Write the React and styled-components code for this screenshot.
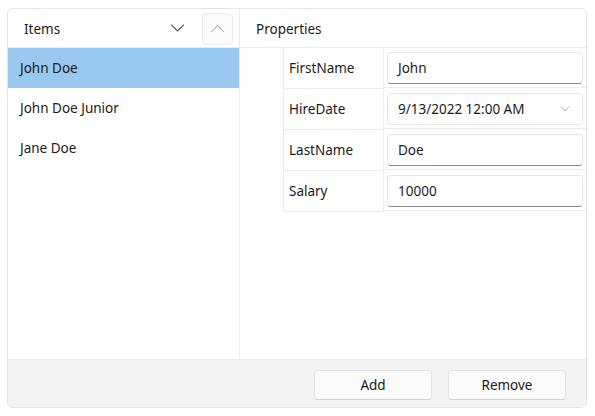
import React from 'react';
import styled, { createGlobalStyle } from 'styled-components';

const GlobalStyle = createGlobalStyle`
  body {
    margin: 0;
    background: #ffffff;
    font-family: "Noto Sans", "Open Sans", "Liberation Sans", sans-serif;
    color: #1b1b1b;
  }
`;

const Page = styled.div`
  padding: 8px 8px 8px 7px;
`;

const Card = styled.div`
  width: 580px;
  height: 400px;
  box-sizing: border-box;
  border: 1px solid #e5e5e5;
  border-radius: 6px;
  overflow: hidden;
  display: grid;
  grid-template-rows: 1fr 48px;
`;

const Main = styled.div`
  display: grid;
  grid-template-columns: 232px 1fr;
  min-height: 0;
`;

const Pane = styled.div`
  display: flex;
  flex-direction: column;
  border-right: ${p => (p.$divider ? '1px solid #ebebeb' : 'none')};
`;

const Header = styled.div`
  height: 39px;
  box-sizing: border-box;
  flex: none;
  display: flex;
  align-items: center;
  padding: 1px 6px 0 ${p => p.$indent}px;
  border-bottom: 1px solid #ebebeb;
  font-size: 13.5px;
`;

const HeaderTitle = styled.span`
  flex: 1;
`;

const ChevronBox = styled.span`
  width: 22px;
  display: flex;
  justify-content: center;
  margin-right: 14px;
`;

const UpButton = styled.button`
  width: 31px;
  height: 32px;
  box-sizing: border-box;
  border: 1px solid #ededed;
  border-radius: 4px;
  background: #fbfbfb;
  display: flex;
  align-items: center;
  justify-content: center;
  padding: 0;
`;

const ListRow = styled.div`
  height: 40px;
  display: flex;
  align-items: center;
  padding-left: 12px;
  font-size: 13.5px;
  background: ${p => (p.$selected ? '#99c9ee' : 'transparent')};
`;

const GridWrap = styled.div`
  padding-left: 43px;
`;

const PropGrid = styled.div`
  display: grid;
  grid-template-columns: 100px 1fr;
  border-left: 1px solid #ebebeb;
`;

const Label = styled.div`
  height: 40px;
  display: flex;
  align-items: center;
  padding-left: 5px;
  font-size: 13.5px;
  border-bottom: 1px solid #ebebeb;
  border-right: 1px solid #ebebeb;
`;

const Cell = styled.div`
  height: 40px;
  display: flex;
  align-items: center;
  padding: 1px 3px 0;
  box-sizing: border-box;
  border-bottom: 1px solid #ebebeb;
`;

const Input = styled.div`
  flex: 1;
  height: 32px;
  box-sizing: border-box;
  border: 1px solid #e6e6e6;
  border-bottom: 1px solid #8a8a8a;
  border-radius: 4px;
  display: flex;
  align-items: center;
  justify-content: space-between;
  padding: 0 10px;
  font-size: 13.5px;
  background: #ffffff;
`;

const DateBox = styled(Input)`
  border-bottom-color: #e6e6e6;
  padding-right: 12px;
`;

const Footer = styled.div`
  background: #f3f3f3;
  border-top: 1px solid #ebebeb;
  display: flex;
  justify-content: flex-end;
  align-items: center;
  gap: 16px;
  padding: 2px 20px 0 0;
`;

const Button = styled.button`
  width: 118px;
  height: 30px;
  box-sizing: border-box;
  border: 1px solid #e5e5e5;
  border-bottom-color: #d0d0d0;
  border-radius: 4px;
  background: #fbfbfb;
  font-family: inherit;
  font-size: 13.5px;
  color: #1b1b1b;
  padding-top: 2px;
`;

const Chevron = ({ up, color, size = 14 }) => (
  <svg width={size} height={size / 2 + 1} viewBox="0 0 14 8" fill="none">
    <path
      d={up ? 'M1 7.5 L7 1.5 L13 7.5' : 'M1 0.5 L7 6.5 L13 0.5'}
      stroke={color}
      strokeWidth="1"
    />
  </svg>
);

const items = ['John Doe', 'John Doe Junior', 'Jane Doe'];

export default function App() {
  return (
    <>
      <GlobalStyle />
      <Page>
        <Card>
          <Main>
            <Pane $divider>
              <Header $indent={16}>
                <HeaderTitle>Items</HeaderTitle>
                <ChevronBox>
                  <Chevron color="#555" size={15} />
                </ChevronBox>
                <UpButton type="button">
                  <Chevron up color="#b5b5b5" size={15} />
                </UpButton>
              </Header>
              {items.map((name, i) => (
                <ListRow key={name} $selected={i === 0}>{name}</ListRow>
              ))}
            </Pane>
            <Pane>
              <Header $indent={16}>
                <HeaderTitle>Properties</HeaderTitle>
              </Header>
              <GridWrap>
                <PropGrid>
                  <Label>FirstName</Label>
                  <Cell><Input>John</Input></Cell>
                  <Label>HireDate</Label>
                  <Cell>
                    <DateBox>
                      9/13/2022 12:00 AM
                      <Chevron color="#888" size={10} />
                    </DateBox>
                  </Cell>
                  <Label>LastName</Label>
                  <Cell><Input>Doe</Input></Cell>
                  <Label>Salary</Label>
                  <Cell><Input>10000</Input></Cell>
                </PropGrid>
              </GridWrap>
            </Pane>
          </Main>
          <Footer>
            <Button type="button">Add</Button>
            <Button type="button">Remove</Button>
          </Footer>
        </Card>
      </Page>
    </>
  );
}
